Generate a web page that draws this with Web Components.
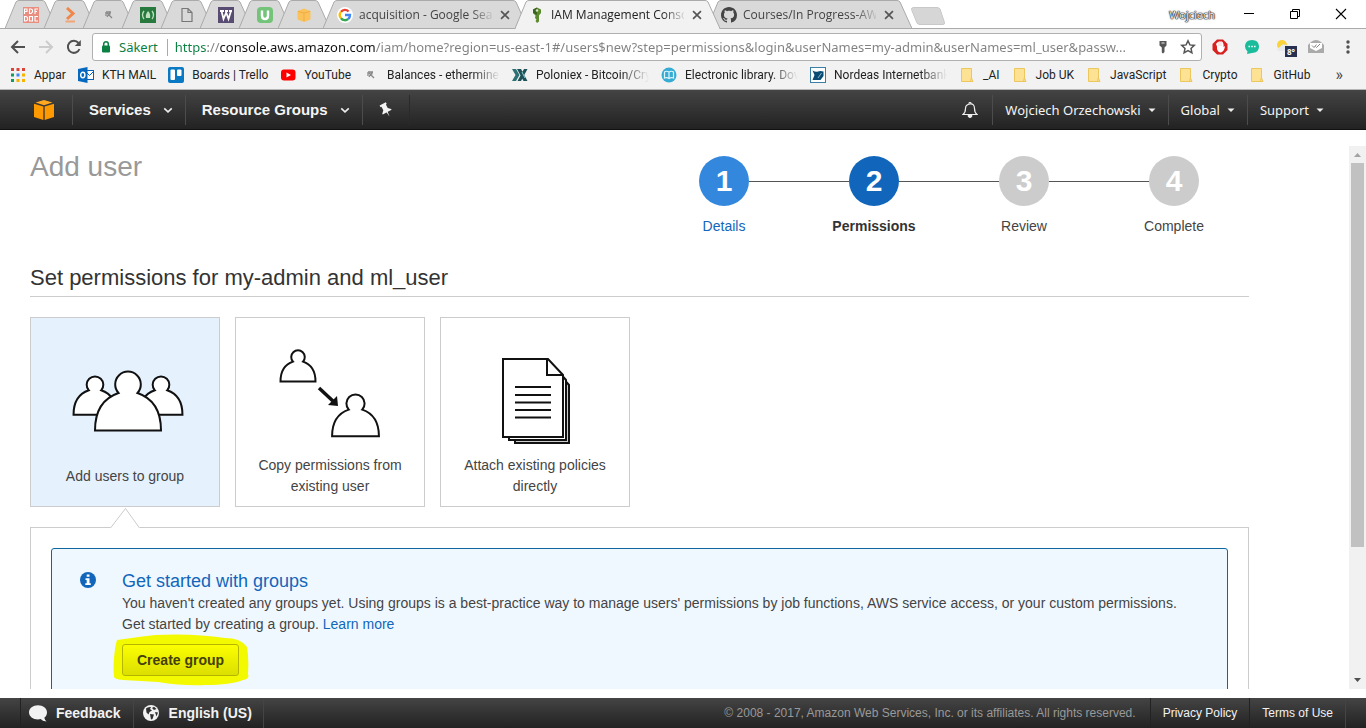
<!DOCTYPE html>
<html lang="en">
<head>
<meta charset="utf-8">
<title>IAM Management Console</title>
<style>
html,body{margin:0;height:100%}
body{font-family:"Liberation Sans",Arial,sans-serif;background:#fff;overflow:hidden}
</style>
</head>
<body>
<iam-app></iam-app>
<script>
const ICONS = {
  pdf: `<rect width="16" height="16" fill="#e98d80"/><path d="M1.500 7V2H4V4.500H2M6.500 2V6.500H8L9.500 5V3L8 2ZM12 7V2H15M12 4.500H14M1.500 9.500V14H3L4.500 13V10.500L3 9.500ZM6.500 9.500H9.500V14H6.500ZM15 9.500H12V14H15" fill="none" stroke="#fff" stroke-width="1.100"/>`,
  kaggle: `<path d="M5 1L11 6.500 5 12" fill="none" stroke="#f0874a" stroke-width="3"/><path d="M3.500 14.500H13" stroke="#f3a577" stroke-width="2"/>`,
  miner: `<path d="M5 5H10M5 5V9M6 6L11 11M9 5L6 10M9 5V7.500" fill="none" stroke="#888" stroke-width="1.300"/>`,
  fcc: `<rect width="16" height="16" fill="#27793d"/><path d="M4 4Q1 8 4 12M12 4Q15 8 12 12" fill="none" stroke="#bfe0c0" stroke-width="1.300"/><path d="M8 4Q11 7 10 11H6Q5 8 8 4Z" fill="#bfe0c0"/>`,
  file: `<path d="M3 1.500H9L13 5.500V14.500H3ZM9 1.500V5.500H13" fill="none" stroke="#777" stroke-width="1.200"/>`,
  wiki: `<rect width="16" height="16" fill="#594c72"/><path d="M2 4H6M7 4H10M11 4H14M3.500 4L5.500 12 8.200 5.500 10.500 12 13 4" fill="none" stroke="#fff" stroke-width="1.800"/>`,
  udemy: `<rect width="16" height="16" rx="4" fill="#73c479"/><path d="M5 3.500V8.500Q5 12 8 12T11 8.500V3.500" fill="none" stroke="#fff" stroke-width="2.400"/>`,
  cubetab: `<path d="M1.500 4L8 1.500 14.500 4V12.500L8 15 1.500 12.500Z" fill="#fbc25c"/><path d="M2 4.500L8 6 14 4.500M8 6V14" stroke="#eead45" fill="none"/>`,
  google: `<circle cx="8" cy="8" r="8" fill="#fff"/><g fill="none" stroke-width="2.400"><path d="M4 4.800A5 5 0 0 1 11.600 4.500" stroke="#ea4335"/><path d="M4 4.800A5 5 0 0 0 4 11.200" stroke="#fbbc05"/><path d="M4 11.200A5 5 0 0 0 11.200 12" stroke="#34a853"/><path d="M11.200 12Q13 10.500 13 8H8" stroke="#4285f4"/></g>`,
  key: `<path d="M8 0.500L12 2.500V6L10 8.500V14.500L8 16 6.500 14 7.500 12.500 6 11 6.500 8.500 4 6V2.500Z" fill="#5b8b2d"/><path d="M8 .5V8L4 6V2.500Z" fill="#3c6520"/><circle cx="8" cy="3.500" r="1.200" fill="#dce8cc"/>`,
  github: `<path fill="#444" d="M8 0C3.580 0 0 3.580 0 8c0 3.540 2.290 6.530 5.470 7.590.4.070.55-.17.55-.38 0-.19-.01-.82-.01-1.490-2.010.37-2.530-.49-2.690-.94-.09-.23-.48-.94-.82-1.130-.28-.15-.68-.52-.01-.53.63-.01 1.080.58 1.230.82.72 1.210 1.870.87 2.330.66.07-.52.28-.87.51-1.070-1.780-.2-3.640-.89-3.640-3.950 0-.87.31-1.590.82-2.150-.08-.2-.36-1.020.08-2.120 0 0 .67-.21 2.200.82.64-.18 1.320-.27 2-.27s1.360.09 2 .27c1.530-1.040 2.200-.82 2.200-.82.44 1.100.16 1.920.08 2.120.51.56.82 1.270.82 2.150 0 3.070-1.870 3.750-3.650 3.950.29.25.54.73.54 1.480 0 1.070-.01 1.930-.01 2.200 0 .21.15.46.55.38A8.010 8.010 0 0 0 16 8c0-4.420-3.580-8-8-8z"/>`,
  close: `<path d="M3.500 3.500L12.500 12.500M12.500 3.500L3.500 12.500" stroke="#555" stroke-width="1.900"/>`,
  min: `<path d="M3 7.500H13" stroke="#000"/>`,
  restore: `<path d="M3.500 5.500H10.500V12.500H3.500ZM5.500 5.500V3.500H12.500V10.500H10.500" fill="none" stroke="#000"/>`,
  winclose: `<path d="M3 3L13 13M13 3L3 13" stroke="#000" stroke-width="1.100"/>`,
  back: `<path d="M15 8H2.500M8 2L2 8 8 14" fill="none" stroke="#505050" stroke-width="2"/>`,
  fwd: `<path d="M1 8H13.500M8 2L14 8 8 14" fill="none" stroke="#ccc" stroke-width="2"/>`,
  reload: `<path d="M13.500 10A6 6 0 1 1 12.500 4" fill="none" stroke="#505050" stroke-width="2"/><path d="M14.800 1V7H8.800Z" fill="#505050"/>`,
  lock: `<rect x="4" y="6.500" width="8" height="7" rx="1" fill="#0b8043"/><path d="M5.700 7V5A2.300 2.300 0 0 1 10.300 5V7" fill="none" stroke="#0b8043" stroke-width="1.500"/>`,
  pass: `<path d="M4.500 2H11.500V6.500L9.500 8.500V13L8 14.500 6.800 13.500V8.500L4.500 6.500Z" fill="#555"/><path d="M6.500 4H9.500" stroke="#eee"/>`,
  star: `<path d="M8 1.800L9.900 5.900 14.300 6.400 11 9.400 11.900 13.800 8 11.600 4.100 13.800 5 9.400 1.700 6.400 6.100 5.900Z" fill="none" stroke="#555" stroke-width="1.500"/>`,
  adblock: `<path d="M5 .5H11L15.500 5V11L11 15.500H5L.5 11V5Z" fill="#d8201f"/><path d="M5 7.500L4 5Q5 3 7 2.500H10Q12 4 11.500 8L13 7Q12.500 12 9 13.500 6 13.500 5 10Z" fill="#fff"/><path d="M7 3V7M9 3V7" stroke="#f3b5b5" stroke-width=".7"/>`,
  chat: `<path d="M8 1C12.500 1 15 3.800 15 7.500S12.500 14 8 14L3 15 3.500 12.500Q1 10.500 1 7.500C1 3.800 3.500 1 8 1Z" fill="#1bbc9b"/><path d="M4.500 7.500H6M7.300 7.500H8.800M10.100 7.500H11.600" stroke="#fff" stroke-width="1.500"/>`,
  mail: `<path d="M0 6L3 3Q8-1 13 3L16 6V14H0Z" fill="#aaa"/><path d="M2 4H14V9L8 12 2 9Z" fill="#fff"/><path d="M4 6.500L6 8.500 8.500 5.500M7.500 7.500L8.500 8.500 12 5" fill="none" stroke="#888"/>`,
  dots: `<g fill="#505050"><circle cx="8" cy="3" r="1.700"/><circle cx="8" cy="8" r="1.700"/><circle cx="8" cy="13" r="1.700"/></g>`,
  apps: `<path d="M1 1h3v3H1zM6.500 1h3v3h-3zM12 1h3v3h-3z" fill="#db4437"/><path d="M1 6.500h3v3H1z" fill="#0f9d58"/><path d="M6.500 6.500h3v3h-3z" fill="#4285f4"/><path d="M12 6.500h3v3h-3zM6.500 12h3v3h-3zM12 12h3v3h-3z" fill="#f4b400"/><path d="M1 12h3v3H1z" fill="#0f9d58"/>`,
  outlook: `<rect x="8" y="3.500" width="7.500" height="9" fill="#fff" stroke="#0a62b8"/><path d="M8 5L11.500 8.500 15.500 4.500" fill="none" stroke="#0a62b8"/><path d="M0 2L9.500 0V16L0 14Z" fill="#0768bf"/><ellipse cx="4.800" cy="8" rx="2.100" ry="2.700" fill="none" stroke="#fff" stroke-width="1.400"/>`,
  trello: `<rect width="16" height="16" rx="2" fill="#0a79c4"/><rect x="2.500" y="2.500" width="4.500" height="10.500" rx="1" fill="#fff"/><rect x="9" y="2.500" width="4.500" height="6.500" rx="1" fill="#fff"/>`,
  youtube: `<rect x="1" y="2.500" width="14.500" height="11" rx="3" fill="#f00"/><path d="M6.500 5.500V10.500L11 8Z" fill="#fff"/>`,
  polo: `<path d="M0 2H4L7.500 8 4 14H0L3.500 8Z" fill="#2d7175"/><path d="M5 2H9L15.500 14H11.500ZM12 2H15.500L9 14H5.500Z" fill="#1d5258"/><path d="M10 5L13 11" stroke="#8cc" />`,
  library: `<circle cx="8" cy="8" r="7.500" fill="#36acd4"/><path d="M8 5Q5.500 3.500 3.500 5V11Q6 10 8 11.500 10 10 12.500 11V5Q10.500 3.500 8 5ZM8 5V11" fill="none" stroke="#dff4fa" stroke-width="1.200"/>`,
  nordea: `<rect x=".5" y=".5" width="15" height="15" fill="#fff" stroke="#3b7fa5"/><path d="M2.500 3.500Q6 5.500 8 4.500T13.500 4.500V9L10.500 13H2.500L4.500 8Z" fill="#0a4b74"/><path d="M8 11L11.500 6" stroke="#8bb6cc"/>`,
  folder: `<path d="M2.500 1.500H12.500V11L14 14.500H2.500Z" fill="#fde293" stroke="#ecc75e"/><path d="M12.500 10L11.500 14.500" stroke="#ecc75e"/>`,
  cube: `<path d="M8 0L14.800 2 8 4.200 1.200 2Z" fill="#ffa820"/><path d="M0 3L7.500 5.200V16L0 13.500ZM16 3L8.500 5.200V16L16 13.500Z" fill="#f90"/>`,
  chev: `<path d="M2 5.500L8 11 14 5.500" fill="none" stroke="#eee" stroke-width="2.600"/>`,
  caret: `<path d="M1 5H15L8 12Z" fill="#eee"/>`,
  pin: `<g transform="rotate(-28 8 8)" fill="#f4f4f4"><path d="M4.500 1H11.500V3H10.500V7L13 9.500V10.500H3V9.500L5.500 7V3H4.500Z"/><path d="M7.300 10H8.700L8 15.500Z"/></g>`,
  bell: `<path d="M1 12.500Q3.500 10.500 3.500 6.500 3.500 2.500 8 2T12.500 6.500Q12.500 10.500 15 12.500Z" fill="none" stroke="#eee" stroke-width="1.200"/><path d="M6.700 1.500A1.300 1.300 0 0 1 9.300 1.500M6 13.500A2 2 0 0 0 10 13.500Z" fill="#eee" stroke="#eee"/>`,
  info: `<circle cx="8" cy="8" r="8" fill="#1166bb"/><path d="M6.700 2.500h2.800v2.300h-2.800zM5.500 6.200h4v5h1.300v1.700H5.300v-1.700h1.400V7.900H5.500z" fill="#fff"/>`,
  bubble: `<path d="M8 1C12.500 1 16 3.600 16 7.300 16 9.500 15 11 13.600 12.200Q14 14 15.500 15.500 12 15.500 10.300 13.400 9 13.700 8 13.700C3.500 13.700 0 11 0 7.300S3.500 1 8 1Z" fill="#f2f2f2"/>`,
  globe: `<circle cx="8" cy="8" r="8" fill="#f2f2f2"/><path d="M3 3.500Q5 1.500 8 2L7 4 9 5.500 6.500 7 5.500 9.500 3.500 7.500ZM9 3L11 1.800 13.500 4 11 5ZM7 9L11 9.500 9.500 14 8 14.500ZM12 7L15 7.500 13.500 11.500Z" fill="#303030"/>`
};

const sheet = css => `<style>*{box-sizing:border-box}a{color:inherit;text-decoration:none}button{font:inherit;color:inherit;background:none;border:0;padding:0;margin:0;cursor:pointer}${css}</style>`;

function define(name, render) {
  customElements.define(name, class extends HTMLElement {
    connectedCallback() {
      if (this.shadowRoot) return;
      this.attachShadow({ mode: "open" }).innerHTML = render(this);
    }
  });
}

define("ui-icon", el => {
  const s = el.getAttribute("size") || 16;
  return sheet(`:host{display:block;flex:none;line-height:0}svg{display:block}`) +
    `<svg width="${s}" height="${s}" viewBox="0 0 16 16" aria-hidden="true">${ICONS[el.getAttribute("name")]}</svg>`;
});

define("browser-tab", el => {
  const label = el.getAttribute("label"), active = el.hasAttribute("active");
  const w = label ? 205 : 52, fill = active ? "#f2f2f2" : "#d9d9d9";
  return sheet(`
    :host{display:block;flex:none;position:relative;width:${w}px;height:29px;margin-right:-13px;z-index:${active ? 2 : 1}}
    .shape{position:absolute;inset:0}
    .row{position:relative;display:flex;align-items:center;height:29px;padding:0 ${label ? "16px 0 14px" : "18px"};gap:6px}
    .label{flex:1;overflow:hidden;white-space:nowrap;text-align:left;color:${active ? "#222" : "#444"};
      -webkit-mask-image:linear-gradient(to right,#000 112px,transparent 136px);mask-image:linear-gradient(to right,#000 112px,transparent 136px)}
    .row>button{display:flex}`) +
    `<svg class="shape" width="${w}" height="29" aria-hidden="true"><path d="M0 28.500L11 2Q12 .5 14 .5H${w - 15}Q${w - 13} .5 ${w - 12} 2L${w} 28.500" fill="${fill}" stroke="#aaa"/>${active ? `<path d="M1 28.500H${w - 1}" stroke="#f2f2f2"/>` : `<path d="M0 28.500H${w}" stroke="#aaa"/>`}</svg>
    <div class="row"><ui-icon name="${el.getAttribute("icon")}"></ui-icon>${label ? `<span class="label">${label}</span><button aria-label="Close tab"><ui-icon name="close" size="14"></ui-icon></button>` : ""}</div>`;
});

define("tab-strip", () => sheet(`
  :host{display:flex;height:29px;flex:none;background:linear-gradient(#fff 28px,#aaa 28px);font:12px "Open Sans",sans-serif;padding-left:5px}
  .tabs{display:flex;flex:1}
  .pinned{display:flex;margin-right:6px}
  .new{width:34px;height:18px;margin:7px 0 0 12px}
  .win{display:flex;align-items:center;padding-right:17px;height:28px}
  .user{font-size:11px;color:#fff;text-shadow:0 0 1px #000,0 0 1px #000,0 0 1px #222,0 0 2px #555;margin-right:26px}
  .win button{display:flex}.win button+button{margin-left:30px}`) + `
  <div class="tabs">
    <div class="pinned">${["pdf", "kaggle", "miner", "fcc", "file", "wiki", "udemy", "cubetab"].map(i => `<browser-tab icon="${i}"></browser-tab>`).join("")}</div>
    <browser-tab icon="google" label="acquisition - Google Sea"></browser-tab>
    <browser-tab icon="key" label="IAM Management Conso" active></browser-tab>
    <browser-tab icon="github" label="Courses/In Progress-AW"></browser-tab>
    <button class="new" aria-label="New tab"><svg width="34" height="18"><path d="M3 .5H26Q28 .5 29 2L33.500 15.500Q34 17.500 32 17.500H9Q7 17.500 6 16L.5 2.500Q0 .5 3 .5Z" fill="#d6d6d6" stroke="#c8c8c8"/></svg></button>
  </div>
  <div class="win"><span class="user">Wojciech</span>
    <button aria-label="Minimize"><ui-icon name="min"></ui-icon></button>
    <button aria-label="Restore"><ui-icon name="restore"></ui-icon></button>
    <button aria-label="Close"><ui-icon name="winclose"></ui-icon></button></div>`);

define("address-bar", () => sheet(`
  :host{display:flex;align-items:center;flex:none;height:36px;background:#f2f2f2;padding:0 10px;font:13px "Noto Sans",sans-serif}
  button{display:flex}
  .go{display:flex;gap:12px;margin-right:10px}
  .box{flex:1;display:flex;align-items:center;height:28px;border:1px solid #b0b0b0;border-radius:3px;background:#fff;padding:0 5px}
  label{color:#0b8043;margin:0 7px 0 5px;padding-right:9px;height:17px;line-height:17px;border-right:1px solid #aaa}
  input{flex:1;min-width:0;border:0;outline:0;padding:0;font:inherit;height:24px;color:transparent;
    background:linear-gradient(to right,#0b8043 33px,#808080 33px 45px,#111 45px 201px,#808080 201px);-webkit-background-clip:text;background-clip:text;text-overflow:ellipsis}
  .act{display:flex;gap:9px;margin-left:8px}
  .ext{display:flex;gap:16px;margin-left:10px;align-items:center}
  .weather{position:relative;width:20px;height:16px;margin-right:-4px}
  .weather span{position:absolute;left:9px;top:7px;width:12px;height:11px;background:#27304f;color:#fff;font:bold 8px/11px "Open Sans",sans-serif;text-align:center}`) + `
  <div class="go"><button aria-label="Back"><ui-icon name="back"></ui-icon></button><button aria-label="Forward"><ui-icon name="fwd"></ui-icon></button><button aria-label="Reload"><ui-icon name="reload"></ui-icon></button></div>
  <div class="box"><ui-icon name="lock"></ui-icon><label for="url">Säkert</label>
    <input id="url" type="text" value="https://console.aws.amazon.com/iam/home?region=us-east-1#/users$new?step=permissions&amp;login&amp;userNames=my-admin&amp;userNames=ml_user&amp;passw...">
    <div class="act"><button aria-label="Saved password"><ui-icon name="pass"></ui-icon></button><button aria-label="Bookmark page"><ui-icon name="star"></ui-icon></button></div></div>
  <div class="ext"><button aria-label="Ad blocker"><ui-icon name="adblock"></ui-icon></button><button aria-label="Chat"><ui-icon name="chat"></ui-icon></button>
    <button class="weather" aria-label="Weather"><svg width="16" height="16"><circle cx="6" cy="6" r="5" fill="#fbd23a"/><path d="M2 12Q0 9 4 8 6 4 10 6 13 6 13 9 15 12 12 12Z" fill="#e7e9ec"/></svg><span>8°</span></button>
    <button aria-label="Mail"><ui-icon name="mail"></ui-icon></button><button aria-label="Menu"><ui-icon name="dots"></ui-icon></button></div>`);

define("bookmark-link", el => sheet(`
  :host{display:block;flex:none}
  a{display:flex;align-items:center;gap:8px;color:#222;white-space:nowrap}
  :host([fade]) span{width:113px;overflow:hidden;-webkit-mask-image:linear-gradient(to right,#000 86px,transparent);mask-image:linear-gradient(to right,#000 86px,transparent)}`) +
  `<a href="#"><ui-icon name="${el.getAttribute("icon")}"></ui-icon><span><slot></slot></span></a>`);

define("bookmark-bar", () => sheet(`
  :host{display:flex;align-items:center;flex:none;height:25px;background:#f2f2f2;border-bottom:1px solid #b6b6b6;padding:0 23px 4px 10px;gap:12px;font:12px Roboto,sans-serif}
  .more{margin-left:auto;font-size:16px;line-height:16px;color:#444}`) + `
  <bookmark-link icon="apps">Appar</bookmark-link><bookmark-link icon="outlook">KTH MAIL</bookmark-link><bookmark-link icon="trello">Boards | Trello</bookmark-link><bookmark-link icon="youtube">YouTube</bookmark-link>
  <bookmark-link icon="miner" fade>Balances - ethermine</bookmark-link><bookmark-link icon="polo" fade>Poloniex - Bitcoin/Cry</bookmark-link><bookmark-link icon="library" fade>Electronic library. Dov</bookmark-link><bookmark-link icon="nordea" fade>Nordeas Internetbank</bookmark-link>
  <bookmark-link icon="folder">_AI</bookmark-link><bookmark-link icon="folder">Job UK</bookmark-link><bookmark-link icon="folder">JavaScript</bookmark-link><bookmark-link icon="folder">Crypto</bookmark-link><bookmark-link icon="folder">GitHub</bookmark-link>
  <button class="more" aria-label="More bookmarks">»</button>`);

define("nav-menu", el => sheet(`
  :host{display:block;flex:none}
  button{display:flex;align-items:center;height:30px;gap:12px;padding:0 12px 0 16px;font:bold 15px "Liberation Sans",sans-serif;color:#f4f4f4;border-right:1px solid #4c4c4c}
  :host([small]) button{font:13px "Noto Sans",sans-serif;gap:7px;padding:0 12px}
  :host([last]) button{border:0}`) +
  `<button aria-haspopup="true"><slot></slot><ui-icon name="${el.hasAttribute("small") ? "caret" : "chev"}" size="${el.hasAttribute("small") ? 8 : 10}"></ui-icon></button>`);

define("console-nav", () => sheet(`
  :host{display:flex;align-items:center;flex:none;height:40px;background:linear-gradient(#444,#222);border-bottom:1px solid #111;color:#fff}
  .logo{display:flex;align-items:center;height:30px;padding:0 18px 0 34px;border-right:1px solid #4c4c4c}
  .pin{display:flex;align-items:center;height:30px;padding:0 15px 0 15px;border-right:1px solid #2a2a2a}
  .bell{display:flex;align-items:center;height:30px;margin-left:auto;padding:0 14px;border-right:1px solid #4c4c4c}
  nav{display:flex;flex:1;padding-right:30px}`) + `
  <nav><a class="logo" href="#" aria-label="Console home"><ui-icon name="cube" size="20"></ui-icon></a>
  <nav-menu>Services</nav-menu><nav-menu>Resource Groups</nav-menu>
  <button class="pin" aria-label="Pin shortcuts"><ui-icon name="pin"></ui-icon></button>
  <button class="bell" aria-label="Alerts"><ui-icon name="bell"></ui-icon></button>
  <nav-menu small>Wojciech Orzechowski</nav-menu><nav-menu small>Global</nav-menu><nav-menu small last>Support</nav-menu></nav>`);

define("wizard-step", el => sheet(`
  :host{display:flex;flex-direction:column;align-items:center;width:150px;flex:none;font-size:14px;line-height:20px;color:#444;--dot:#ccc}
  :host([state=done]){color:#16b;--dot:#38d}
  :host([state=current]){color:#333;font-weight:bold;--dot:#16b}
  .line{display:flex;align-items:center;width:100%;margin-bottom:10px}
  .line i{flex:1;height:1px;background:#555}
  :host(:first-of-type) i:first-child,:host(:last-of-type) i:last-child{background:none}
  .dot{width:50px;height:50px;border-radius:50%;background:var(--dot);color:#fff;font:bold 30px/50px "Liberation Sans",sans-serif;text-align:center}`) +
  `<div class="line"><i></i><span class="dot">${el.getAttribute("n")}</span><i></i></div><slot></slot>`);

define("option-card", () => sheet(`
  :host{display:block;flex:none}
  button{display:flex;flex-direction:column;justify-content:flex-end;align-items:center;width:190px;height:190px;border:1px solid #ccc;background:#fff;color:#444;font-size:14px;line-height:21px;padding:0 20px 9px}
  :host([selected]) button{background:#e5f1fd;padding-bottom:19px}
  .text{display:block;margin-top:10px}
  :host([selected]) .text{margin-top:21px}
  ::slotted(svg){display:block}`) + `<button><slot name="art"></slot><span class="text"><slot></slot></span></button>`);

define("info-alert", el => sheet(`
  :host{display:flex;border:1px solid #1166a0;border-radius:3px;background:#f0f8ff;padding:21px 28px 40px;gap:26px;height:180px}
  ui-icon{margin-top:2px}
  .body{min-width:0}
  h3{margin:0;font-size:18px;font-weight:normal;line-height:23px;color:#16b}
  .text{font-size:14px;line-height:21px;color:#444}
  .act{position:relative;margin-top:9px;display:flex}`) +
  `<ui-icon name="info"></ui-icon><div class="body"><h3>${el.getAttribute("heading")}</h3><div class="text"><slot></slot></div><div class="act"><slot name="action"></slot></div></div>`);

define("marked-button", () => sheet(`
  :host{display:block;position:relative}
  svg{position:absolute;left:-9px;top:-10px}
  button{position:relative;height:32px;padding:0 14px;border:1px solid #b5b500;border-radius:3px;background:linear-gradient(#fbff00,#dcdf00);font-size:14px;font-weight:bold;color:#443f08}`) + `
  <svg width="136" height="52" aria-hidden="true"><path d="M4 6Q24 3 42 1 80-1 112 4 128 4 134 13 136 24 135 40 137 45 130 46 118 51 92 51 70 52 45 48 28 47 10 46 0 45 1 42 0 34 1 24 2 12 4 6Z" fill="#f3fa00"/></svg>
  <button><slot></slot></button>`);

define("scroll-track", () => sheet(`
  :host{display:flex;flex-direction:column;flex:none;width:17px;background:#f1f1f1;margin-top:16px}
  .rail{flex:1;padding:0 2px;display:flex;flex-direction:column}
  .thumb{flex:0 0 75.5%;background:#c1c1c1}
  svg{display:block}`) + `
  <svg width="17" height="17"><path d="M5 11H12L8.500 7Z" fill="#a3a3a3"/></svg><div class="rail"><div class="thumb"></div></div><svg width="17" height="17"><path d="M5 6H12L8.500 10Z" fill="#505050"/></svg>`);

define("console-footer", () => sheet(`
  :host{display:flex;flex:none;height:30px;background:linear-gradient(#444,#222);padding:0 20px;color:#f2f2f2;font-size:12px}
  .lang,.fb{display:flex;align-items:center;font-size:14px;font-weight:bold;gap:9px;padding:0 12px 0 8px;border-right:1px solid #444}
  .fb{border-left:1px solid #222}
  .lang{padding:0 11px 0 9px;gap:10px}
  p{margin:0 14px 0 auto;line-height:30px;color:#999}
  a{line-height:30px;padding:0 12px;border-left:1px solid #222;}
  a:last-child{border-right:1px solid #444}`) + `
  <button class="fb"><ui-icon name="bubble" size="18"></ui-icon>Feedback</button><button class="lang"><ui-icon name="globe"></ui-icon>English (US)</button>
  <p>© 2008 - 2017, Amazon Web Services, Inc. or its affiliates. All rights reserved.</p><a href="#">Privacy Policy</a><a href="#">Terms of Use</a>`);

const person = (x, y, s) => `<path transform="translate(${x} ${y}) scale(${s})" vector-effect="non-scaling-stroke" d="M-33 59.500Q-33 30-9.500 22A12.800 12.800 0 1 1 9.500 22Q33 30 33 59.500Z" fill="#fff" stroke="#111" stroke-width="2"/>`;

define("add-user-page", () => sheet(`
  :host{display:block;flex:1;min-width:0;padding:26px 100px 0 30px;color:#333}
  header{display:flex;justify-content:space-between;height:110px}
  h1{margin:0;font-size:28px;line-height:22px;font-weight:normal;color:#999}
  .steps{display:flex}
  h2{margin:0;font-size:22px;font-weight:normal;line-height:24px;height:31px;border-bottom:1px solid #ccc;margin-bottom:20px;color:#333}
  .cards{display:flex;gap:15px;margin-bottom:20px}
  .panel{position:relative;border:1px solid #ccc;padding:20px;height:240px}
  .notch{position:absolute;left:79px;top:-20px}
  a{color:#16b}`) + `
  <header><h1>Add user</h1><div class="steps"><wizard-step n="1" state="done">Details</wizard-step><wizard-step n="2" state="current">Permissions</wizard-step><wizard-step n="3">Review</wizard-step><wizard-step n="4">Complete</wizard-step></div></header>
  <h2>Set permissions for my-admin and ml_user</h2>
  <div class="cards">
    <option-card selected><svg slot="art" width="118" height="75" viewBox="0 0 118 75">${person(29, 6, .65)}${person(95, 6, .65)}${person(62, 1, 1)}</svg>Add users to group</option-card>
    <option-card><svg slot="art" width="104" height="96" viewBox="0 0 104 96">${person(20, 1, .53)}${person(77.500, 45, .71)}<path d="M41 39L56 53" stroke="#111" stroke-width="3.500"/><path d="M60 57L50 56 59 47Z" fill="#111"/></svg>Copy permissions from existing user</option-card>
    <option-card><svg slot="art" width="72" height="88" viewBox="0 0 72 88"><g fill="#ccc" stroke="#111" stroke-width="2"><path d="M16 10H54L70 28V86H16Z"/><path d="M10 6H52L67 23V83H10Z" fill="#fff"/><path d="M4 2H49L64 18V80H4Z" fill="#fff"/><path d="M48 2V18H64" fill="none"/><path d="M16 30H52M16 38H52M16 45.500H52M16 53H52M16 60.500H52" fill="none"/></g></svg>Attach existing policies directly</option-card>
  </div>
  <div class="panel"><svg class="notch" width="30" height="21" aria-hidden="true"><path d="M0 21V20L15.500 .5 30 20V21Z" fill="#fff"/><path d="M.500 20L15.500 .5 29.500 20" fill="none" stroke="#ccc"/></svg>
    <info-alert heading="Get started with groups"><span>You haven't created any groups yet. Using groups is a best-practice way to manage users' permissions by job functions, AWS service access, or your custom permissions.</span> <span>Get started by creating a group.</span> <a href="#">Learn more</a><marked-button slot="action">Create group</marked-button></info-alert>
  </div>`);

define("iam-app", () => sheet(`
  :host{display:flex;flex-direction:column;height:100vh}
  main{flex:1;min-height:0;display:flex;overflow:hidden;margin-bottom:9px}`) + `
  <tab-strip></tab-strip><address-bar></address-bar><bookmark-bar></bookmark-bar><console-nav></console-nav>
  <main><add-user-page></add-user-page><scroll-track></scroll-track></main>
  <console-footer></console-footer>`);
</script>
</body>
</html>
